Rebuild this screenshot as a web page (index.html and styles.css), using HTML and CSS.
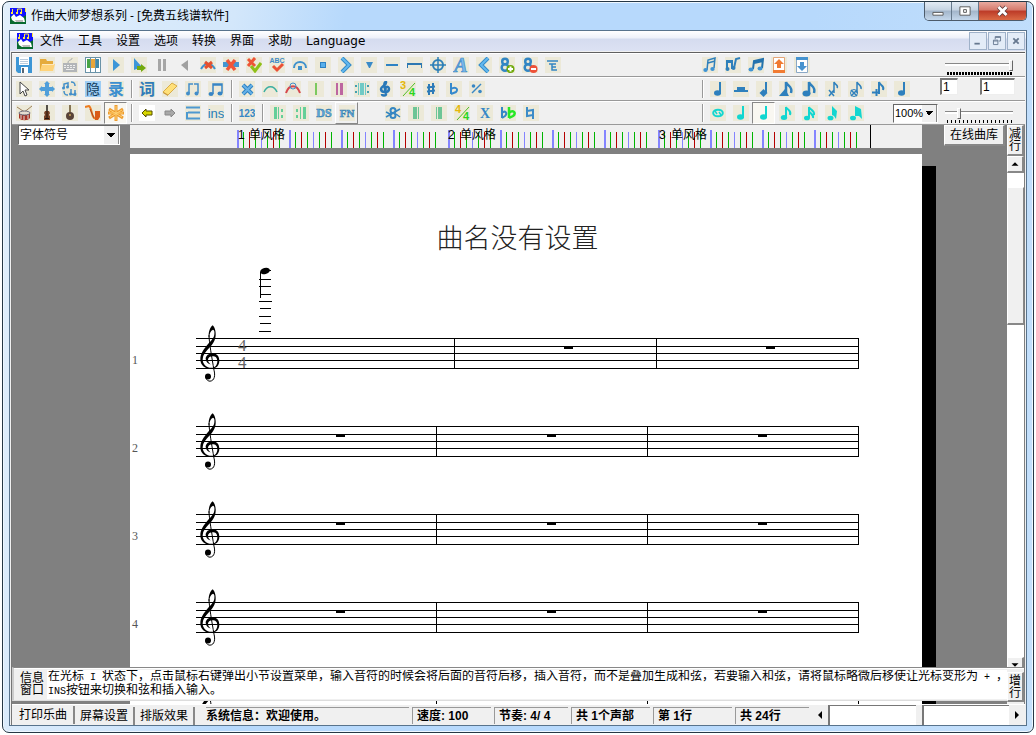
FILE: index.html
```html
<!DOCTYPE html>
<html lang="zh-CN">
<head>
<meta charset="utf-8">
<title>作曲大师梦想系列</title>
<link rel="stylesheet" href="styles.css">
</head>
<body>
<svg class="sprite" aria-hidden="true">
  <defs>
    <symbol id="logo" viewBox="0 0 16 16"><path fill="#11f" d="M0 0h16v9H0z"/><path fill="#086a30" d="M0 9l3-2 2 3h6l5-3v9H0z"/><path d="M2.500 5V1M7.500 5V1h4v4M15.500 0v4" fill="none" stroke="#ffe840"/><path fill="#ffe840" d="M1 4h2v2H1zM6 4h2v2H6zM10 4h2v2h-2z"/><path fill="#fff" d="M1 9l3-3 2 3 4-2 4 3 1 4H5l-3-2z"/><path fill="#bbb" d="M5 12h8v2H6z"/></symbol>
    <symbol id="save" viewBox="0 0 16 16"><path fill="#3d96d6" d="M0 0h16v16H2l-2-2z"/><path fill="#fff" d="M3 0h10v8H3zM5 10h7v6H5z"/><path stroke="#bcd" d="M4 2.500h8M4 4.500h8M4 6.500h8"/><path fill="#567" d="M6 11h2v5H6z"/></symbol>
    <symbol id="folder" viewBox="0 0 16 16"><path fill="#e5ab3d" d="M1 2h6l1 2h6v10H1z"/><path fill="#ffd37a" d="M3 7h13l-2 7H1z"/><path fill="#fff" opacity=".5" d="M3 7h12v1H3z"/></symbol>
    <symbol id="keyboard" viewBox="0 0 16 16"><path fill="#b2b5b8" d="M1 6h14v9H1z"/><path d="M6 6c0-4 4-2 4-5" fill="none" stroke="#a5a9ac"/><path stroke="#eee" stroke-dasharray="2 1" d="M2 8.500h12M2 10.500h12"/><path stroke="#eee" d="M4 12.500h8"/></symbol>
    <symbol id="piano" viewBox="0 0 16 16"><path fill="#6a93a8" d="M0 0h16v16H0z"/><path fill="#fff" d="M1 1h4v14H1zM6 1h4v14H6zM11 1h4v14h-4z"/><path fill="#47a447" d="M2 2h3v9H2z"/><path fill="#e8a53a" d="M6 2h4v9H6z"/><path fill="#3f88a8" d="M11 2h3v9h-3z"/></symbol>
    <symbol id="play" viewBox="0 0 16 16"><path fill="#3c96d8" d="M5 2l7 6-7 6z"/></symbol>
    <symbol id="play-next" viewBox="0 0 16 16"><path fill="#3c96d8" d="M3 1l8 9-8 3z"/><path fill="#72a90e" d="M6 9h4V7l5 4-5 4v-2H6z"/></symbol>
    <symbol id="pause" viewBox="0 0 16 16"><path fill="#a6a6a6" d="M4 2h3v12H4zM9 2h3v12H9z"/></symbol>
    <symbol id="back" viewBox="0 0 16 16"><path fill="#a0a0a0" d="M11 3v11L4 8z"/></symbol>
    <symbol id="slur-x" viewBox="0 0 16 16"><path d="M1 12c4-7 10-7 14 0" fill="none" stroke="#3e91cd" stroke-width="2"/><path d="M5 5l7 6M12 5l-7 6" stroke="#e4502e" stroke-width="3"/></symbol>
    <symbol id="bar-x" viewBox="0 0 16 16"><path fill="#4495d2" d="M0 5h16v5H0z"/><path d="M4 3l8 10M12 3L4 13" stroke="#f0553a" stroke-width="3.500"/></symbol>
    <symbol id="x-check" viewBox="0 0 16 16"><path d="M2 2l7 7M9 1L2 9" stroke="#ee5535" stroke-width="3"/><path d="M5 9l4 5 6-8" fill="none" stroke="#8fc018" stroke-width="3"/></symbol>
    <symbol id="abc" viewBox="0 0 16 16"><text x="8" y="6" font-size="7" font-weight="700" fill="#3d8bc8" text-anchor="middle">ABC</text><path d="M4 9l4 4 6-6" fill="none" stroke="#ea5136" stroke-width="3"/></symbol>
    <symbol id="fermata" viewBox="0 0 16 16"><path d="M2 11c0-8 12-8 12 0" fill="none" stroke="#3e91cd" stroke-width="2"/><path fill="#3e91cd" d="M6 9h4v4H6z"/></symbol>
    <symbol id="dot" viewBox="0 0 16 16"><path fill="#2e83c4" d="M5 5h6v6H5z"/><path fill="#59b0ec" d="M6 6h4v4H6z"/></symbol>
    <symbol id="accent" viewBox="0 0 16 16"><path d="M4 1l7 7-7 7" fill="none" stroke="#348bc9" stroke-width="4"/><path d="M4 1l7 7-7 7" fill="none" stroke="#64b9ef" stroke-width="2"/></symbol>
    <symbol id="wedge" viewBox="0 0 16 16"><path fill="#3a8bc8" d="M5 5h7l-3 6H8z"/></symbol>
    <symbol id="dash" viewBox="0 0 16 16"><path fill="#2e83c4" d="M2 7h12v2H2z"/></symbol>
    <symbol id="bracket" viewBox="0 0 16 16"><path fill="#2e78b2" d="M0 6h15v5h-1V8H1v3H0z"/></symbol>
    <symbol id="coda" viewBox="0 0 16 16"><circle cx="8" cy="8" r="5" fill="none" stroke="#2e80b8" stroke-width="2"/><path d="M8 0v16M0 8h16" stroke="#2e80b8" stroke-width="1.500"/></symbol>
    <symbol id="letter" viewBox="0 0 16 16"><text class="serif" x="8" y="15" font-size="20" font-weight="700" font-style="italic" fill="#7bb9eb" stroke="#3c8aca" stroke-width=".7" text-anchor="middle">A</text></symbol>
    <symbol id="less" viewBox="0 0 16 16"><path d="M12 1L5 8l7 7" fill="none" stroke="#348bc9" stroke-width="4"/><path d="M12 1L5 8l7 7" fill="none" stroke="#64b9ef" stroke-width="2"/></symbol>
    <symbol id="eight" viewBox="0 0 16 16"><circle cx="6" cy="4.500" r="2.800" fill="none" stroke="#3286c4" stroke-width="2.500"/><circle cx="6" cy="10.500" r="3.300" fill="none" stroke="#3286c4" stroke-width="2.500"/></symbol>
    <symbol id="eight-plus" viewBox="0 0 16 16"><use href="#eight"/><circle cx="11.500" cy="12" r="4" fill="#70a90b"/><path stroke="#fff" stroke-width="2" d="M9 12h5M11.500 9.500v5"/></symbol>
    <symbol id="eight-minus" viewBox="0 0 16 16"><use href="#eight"/><circle cx="11.500" cy="12" r="4" fill="#ed5138"/><path stroke="#fff" stroke-width="2" d="M9 12h5"/></symbol>
    <symbol id="tremolo" viewBox="0 0 16 16"><path d="M2 4h11M4 7h7M7 7v6h5M7 10h4" fill="none" stroke="#3686c2" stroke-width="1.500"/></symbol>
    <symbol id="cursor" viewBox="0 0 16 16"><path d="M4 1v12l3-3 2 5 2-1-2-5h4z" fill="#fff" stroke="#444"/></symbol>
    <symbol id="move" viewBox="0 0 16 16"><path d="M8 0l4 4h-2v2h2V4l4 4-4 4v-2h-2v2h2l-4 4-4-4h2v-2H4v2L0 8l4-4v2h2V4H4z" fill="#509fda"/><path fill="#ece9d8" d="M3 3h3v3H3zM10 3h3v3h-3zM3 10h3v3H3zM10 10h3v3h-3z"/></symbol>
    <symbol id="convert" viewBox="0 0 16 16"><path d="M2 7V3l4-1v4M9 8v5l4 1V9M9 1c4 0 4 2 4 4M2 10c0 4 2 4 4 4" fill="none" stroke="#438fca" stroke-width="1.500"/><circle cx="1.500" cy="7" r="1.500" fill="#438fca"/><circle cx="5.500" cy="6" r="1.500" fill="#438fca"/><circle cx="8.500" cy="13" r="1.500" fill="#438fca"/><circle cx="13" cy="13" r="1.500" fill="#438fca"/></symbol>
    <symbol id="hide" viewBox="0 0 16 16"><path fill="#9ecdf4" d="M0 0h16v16H0z"/><text x="8" y="13" font-size="14" fill="#123c5e" text-anchor="middle">隐</text></symbol>
    <symbol id="record" viewBox="0 0 16 16"><text x="8" y="14" font-size="16" font-weight="700" fill="#3c8fd0" text-anchor="middle">录</text></symbol>
    <symbol id="lyric" viewBox="0 0 16 16"><text x="8" y="14" font-size="16" font-weight="700" fill="#307cb8" text-anchor="middle">词</text></symbol>
    <symbol id="eraser" viewBox="0 0 16 16"><path d="M1 11l9-9 5 3-9 9z" fill="#ffe078" stroke="#d8ac48"/><path d="M1 11l5 3v1l-5-3z" fill="#c89535"/></symbol>
    <symbol id="pair" viewBox="0 0 16 16"><path d="M4 12V3h4M9 3h4v9" fill="none" stroke="#428dc9" stroke-width="1.500"/><circle cx="3" cy="12.500" r="2" fill="#428dc9"/><circle cx="11.500" cy="12.500" r="2" fill="#428dc9"/></symbol>
    <symbol id="beam" viewBox="0 0 16 16"><path d="M5 13V3h9v9M5 4h9" fill="none" stroke="#3785c5" stroke-width="1.500"/><ellipse cx="3" cy="13" rx="2.500" ry="2" fill="#3785c5"/><ellipse cx="12" cy="12.500" rx="2.500" ry="2" fill="#3785c5"/></symbol>
    <symbol id="cross" viewBox="0 0 16 16"><path d="M4 4l9 9M13 4l-9 9" stroke="#2d82c3" stroke-width="4"/><path d="M4 4l9 9M13 4l-9 9" stroke="#66b1e7" stroke-width="2"/></symbol>
    <symbol id="slur" viewBox="0 0 16 16"><path d="M2 11c3-7 10-7 13 0" fill="none" stroke="#3aaea0" stroke-width="1.500"/></symbol>
    <symbol id="slur-red" viewBox="0 0 16 16"><path d="M1 12c3-9 11-9 14 0" fill="none" stroke="#d6474d" stroke-width="2"/><circle cx="8" cy="5" r="3" fill="none" stroke="#438fca"/></symbol>
    <symbol id="bar" viewBox="0 0 16 16"><path fill="#7cc95f" d="M7 2h2v12H7z"/></symbol>
    <symbol id="double-bar" viewBox="0 0 16 16"><path fill="#bd66a0" d="M5 2h2v12H5zM9 2h3v12H9z"/></symbol>
    <symbol id="repeat-both" viewBox="0 0 16 16"><path fill="#70cac5" d="M4 2h1v12H4zM6 2h4v12H6zM11 2h1v12h-1z"/><path fill="#449fae" d="M1 4h2v2H1zM1 10h2v2H1zM13 4h2v2h-2zM13 10h2v2h-2z"/></symbol>
    <symbol id="mini-clef" viewBox="0 0 16 16"><path d="M9 9c-2-4 3-4 3-1 0 4-8 4-8 0 0-3 6-4 5-7-2 0-2 3-1 7l1 5c0 2-4 2-4 0" fill="none" stroke="#2878b8" stroke-width="2.500"/></symbol>
    <symbol id="three-four" viewBox="0 0 16 16"><path d="M3 15L15 2" stroke="#52bf26"/><text x="3" y="8" font-size="11" font-weight="700" fill="#e5b70b" text-anchor="middle">3</text><text x="12" y="15" font-size="11" font-weight="700" fill="#28d61c" text-anchor="middle">4</text></symbol>
    <symbol id="four-four" viewBox="0 0 16 16"><path d="M3 15L15 2" stroke="#52bf26"/><text x="4" y="8" font-size="11" font-weight="700" fill="#e5b70b" text-anchor="middle">4</text><text x="12" y="15" font-size="11" font-weight="700" fill="#28d61c" text-anchor="middle">4</text></symbol>
    <symbol id="sharp" viewBox="0 0 16 16"><path d="M6 3v11M10 2v11M4 6.500l8-1M4 10.500l8-1" stroke="#2c7bb8" stroke-width="2"/></symbol>
    <symbol id="flat" viewBox="0 0 16 16"><path d="M5 2v11M5 8c4-3 8 0 5 3-2 1-3 1-5 2" fill="none" stroke="#3589cd" stroke-width="2"/></symbol>
    <symbol id="percent" viewBox="0 0 16 16"><path d="M3 12l9-9" stroke="#3988c5" stroke-width="1.500"/><circle cx="4.500" cy="5" r="1.800" fill="#3988c5"/><circle cx="11" cy="10.500" r="1.800" fill="#3988c5"/></symbol>
    <symbol id="drum" viewBox="0 0 16 16"><path d="M1 2l9 6M16 1L7 8" stroke="#9d805b"/><path fill="#a73224" d="M3 8h11v5c-2 3-9 3-11 0z"/><ellipse cx="8.500" cy="8" rx="5.500" ry="2" fill="#e5ddd0" stroke="#667"/><path stroke="#ddd" d="M5 10v4M8 11v4M12 10v4"/></symbol>
    <symbol id="violin" viewBox="0 0 16 16"><path d="M8 0v7" stroke="#201b18" stroke-width="1.500"/><path fill="#774327" d="M6 6h4l1 2-1 2 1 1v4H5v-4l1-1-1-2z"/><path stroke="#24150d" d="M8 6v7M6 13.500h4"/></symbol>
    <symbol id="lute" viewBox="0 0 16 16"><path d="M8 0v8" stroke="#654e28" stroke-width="1.500"/><circle cx="8" cy="11" r="4" fill="#594338"/><circle cx="8" cy="10" r="1" fill="#cba65c"/></symbol>
    <symbol id="sax" viewBox="0 0 16 16"><path d="M0 2l4-1c3 2 2 9 5 12 3 2 3-1 4-6" fill="none" stroke="#ed7b20" stroke-width="2"/><path fill="#d95a18" d="M10 6h5v6l-2 3h-3z"/><path d="M5 4l4 9" stroke="#a94b28"/></symbol>
    <symbol id="star" viewBox="0 0 16 16"><path d="M8 0v16M1 4l14 9M15 4L1 13M0 8h16" stroke="#ee9c2e" stroke-width="3"/><path d="M8 1v14M2 5l12 7M14 5L2 12M1 8h14" stroke="#ffd174"/></symbol>
    <symbol id="left" viewBox="0 0 16 16"><path d="M3 8l4-4v2h6v4H7v2z" fill="#d7d600" stroke="#554f00"/></symbol>
    <symbol id="right" viewBox="0 0 16 16"><path d="M13 8L9 4v2H3v4h6v2z" fill="#a8a8a8" stroke="#888"/></symbol>
    <symbol id="lines" viewBox="0 0 16 16"><path d="M1 2.500h14M3 7.500h12M1 13.500h14M2 7v6" fill="none" stroke="#4c98d0" stroke-width="2"/></symbol>
    <symbol id="ins" viewBox="0 0 16 16"><text x="8" y="13" font-size="13" fill="#277eba" text-anchor="middle">ins</text></symbol>
    <symbol id="num" viewBox="0 0 16 16"><text x="8" y="12" font-size="10" font-weight="700" fill="#3687c5" text-anchor="middle">123</text></symbol>
    <symbol id="repeat-start" viewBox="0 0 16 16"><path fill="#65cf98" d="M4 2h3v12H4zM8 2h1v12H8zM11 4h2v3h-2zM11 10h2v3h-2z"/></symbol>
    <symbol id="repeat-end" viewBox="0 0 16 16"><path fill="#65cf98" d="M10 2h3v12h-3zM7 2h1v12H7zM3 4h2v3H3zM3 10h2v3H3z"/></symbol>
    <symbol id="ds" viewBox="0 0 16 16"><text class="serif" x="8" y="12" font-size="12" font-weight="700" fill="#61acdf" stroke="#347cad" stroke-width=".5" text-anchor="middle">DS</text></symbol>
    <symbol id="fn" viewBox="0 0 16 16"><text class="serif" x="8" y="12" font-size="11" font-weight="700" fill="#61acdf" stroke="#347cad" stroke-width=".5" text-anchor="middle">FN</text></symbol>
    <symbol id="segno" viewBox="0 0 16 16"><circle cx="8" cy="5.500" r="2.500" fill="none" stroke="#3586c2" stroke-width="2"/><circle cx="8" cy="10.500" r="2.500" fill="none" stroke="#3586c2" stroke-width="2"/><path d="M1 12l14-8M1 7l4 2M11 9l4 3" stroke="#3586c2" stroke-width="1.500"/></symbol>
    <symbol id="end-bar" viewBox="0 0 16 16"><path fill="#6dc596" d="M5 2h4v12H5zM10 2h1v12h-1z"/></symbol>
    <symbol id="start-bar" viewBox="0 0 16 16"><path fill="#6dc596" d="M7 2h4v12H7zM5 2h1v12H5z"/></symbol>
    <symbol id="double-sharp" viewBox="0 0 16 16"><text class="serif" x="8" y="13" font-size="14" font-weight="700" fill="#3587c7" text-anchor="middle">X</text></symbol>
    <symbol id="double-flat" viewBox="0 0 16 16"><path d="M2 2v11M2 8c3-3 6 0 3 3L2 13" fill="none" stroke="#3587c7" stroke-width="2"/><path d="M9 2v11M9 8c4-4 8 0 4 3l-4 2" fill="none" stroke="#25e826" stroke-width="2.500"/></symbol>
    <symbol id="natural" viewBox="0 0 16 16"><path d="M4 2v9l6-1M4 6l6-1v9" fill="none" stroke="#3b8bc8" stroke-width="2"/></symbol>
    <symbol id="sixteenth-beam" viewBox="0 0 16 16"><path d="M5 13L6 3l7-2-1 10M6 6l7-2" fill="none" stroke="#2f80bb" stroke-width="1.500"/><ellipse cx="3.500" cy="13" rx="2.200" ry="2" fill="#3f94d4"/><ellipse cx="10.500" cy="12" rx="2.200" ry="2" fill="#3f94d4"/></symbol>
    <symbol id="notes-link" viewBox="0 0 16 16"><path d="M2 12V4h5v8M9 11l2-9 4-1M2 5h5" fill="none" stroke="#2f80bb" stroke-width="2"/><circle cx="2.500" cy="12" r="2" fill="#2f80bb"/><circle cx="8.500" cy="11" r="2" fill="#2f80bb"/></symbol>
    <symbol id="wide-beam" viewBox="0 0 16 16"><path d="M5 12l1-8 9-2-1 9M6 6l9-2" fill="none" stroke="#2472ad" stroke-width="2"/><ellipse cx="3" cy="12.500" rx="2.500" ry="2" fill="#3f94d4"/><ellipse cx="12" cy="11.500" rx="2.500" ry="2" fill="#3f94d4"/></symbol>
    <symbol id="upload" viewBox="0 0 16 16"><path fill="#fff" stroke="#e5a577" d="M2.500.5h11v15h-11z"/><path fill="#f17b32" d="M2 13h12v3H2zM8 2l5 5h-3v4H6V7H3z"/></symbol>
    <symbol id="download" viewBox="0 0 16 16"><path fill="#fff" stroke="#8ba8c5" d="M2.500.5h11v15h-11z"/><path fill="#4693cf" d="M2 0h12v3H2zM8 14l5-5h-3V5H6v4H3z"/></symbol>
    <symbol id="quarter" viewBox="0 0 16 16"><path d="M10 1v12" stroke="currentColor" stroke-width="2"/><ellipse cx="7.500" cy="12" rx="3.500" ry="2.800" fill="currentColor"/></symbol>
    <symbol id="rest" viewBox="0 0 16 16"><path fill="currentColor" d="M1 9h14v2H1zM4 6h8v3H4z"/></symbol>
    <symbol id="diamond" viewBox="0 0 16 16"><path d="M10 1v11" stroke="currentColor" stroke-width="2"/><path d="M7.500 8l4 4-4 4-4-4z" fill="currentColor"/></symbol>
    <symbol id="eighth" viewBox="0 0 16 16"><path d="M7 13V2c1 3 6 3 4 8" fill="none" stroke="currentColor" stroke-width="2"/><ellipse cx="5" cy="12.500" rx="3.200" ry="2.500" fill="currentColor"/></symbol>
    <symbol id="big-eighth" viewBox="0 0 16 16"><path d="M7 13V1c1 4 7 4 5 11" fill="none" stroke="currentColor" stroke-width="2.500"/><ellipse cx="4.500" cy="12.500" rx="4" ry="3" fill="currentColor"/></symbol>
    <symbol id="triangle-note" viewBox="0 0 16 16"><path d="M7 13V1c1 4 7 4 5 11" fill="none" stroke="currentColor" stroke-width="2.500"/><path d="M0 15l6-7 4 7z" fill="currentColor"/></symbol>
    <symbol id="sixteenth" viewBox="0 0 16 16"><path d="M7 13V2c1 3 6 3 5 8M7 6c1 3 5 3 4 7" fill="none" stroke="currentColor" stroke-width="2"/><ellipse cx="5" cy="13" rx="3" ry="2.300" fill="currentColor"/></symbol>
    <symbol id="thirty-second" viewBox="0 0 16 16"><path fill="currentColor" d="M7 1l5 5-1 8-2-3-2-1z"/><ellipse cx="5.500" cy="13" rx="3" ry="2.300" fill="currentColor"/></symbol>
    <symbol id="sixty-fourth" viewBox="0 0 16 16"><path fill="currentColor" d="M7 1l6 3 1 10-3-3H7z"/><ellipse cx="5" cy="13" rx="3" ry="2.300" fill="currentColor"/></symbol>
    <symbol id="grace" viewBox="0 0 16 16"><path d="M9 12V1c1 3 5 3 3 6M4 9l5 6M9 9l-5 6" fill="none" stroke="currentColor" stroke-width="1.500"/></symbol>
    <symbol id="grace-o" viewBox="0 0 16 16"><path d="M9 12V1c1 3 5 3 4 7M3 9l6 6M9 9l-6 6" fill="none" stroke="currentColor" stroke-width="1.500"/><circle cx="6" cy="12" r="3.500" fill="none" stroke="currentColor"/></symbol>
    <symbol id="grace-plus" viewBox="0 0 16 16"><path d="M8 13V1c1 4 6 3 4 8M1 11.500h8M5.500 8v7" fill="none" stroke="currentColor" stroke-width="2"/></symbol>
    <symbol id="whole" viewBox="0 0 16 16"><ellipse cx="8" cy="8" rx="4.800" ry="3.300" fill="none" stroke="currentColor" stroke-width="2"/><path d="M5 6l2 3M9 7l2 3" stroke="currentColor" stroke-width="1.500"/></symbol>
    <symbol id="clef" viewBox="0 0 60 170"><path d="M27 30C27 50 36 100 42 135C46 150 44 167 30 168C22 168 16 160 18 154" fill="none" stroke="#000" stroke-width="3"/><circle cx="24" cy="154" r="9"/><path d="M26 36C25 18 31 5 38 0C44 5 48 18 47 30C46 46 38 57 28 68C16 81 9 89 8 102C8 118 20 128 34 128C45 128 52 119 52 108C52 97 46 93 38 93C29 93 24 98 24 104C24 111 28 115 32 118C24 116 17 110 17 101C17 91 26 84 38 84C50 84 58 93 58 106C58 122 48 131 33 131C14 131 1 119 1 102C1 84 12 71 21 60C31 48 41 42 43 28C44 20 43 15 39 14C32 17 28 26 28 36Z"/></symbol>
    <g id="beat"><path fill="#8484ff" d="M0 5h2v18H0zM24 7h1v16h-1z"/><path fill="#00b400" d="M6 7h1v16H6zM18 7h1v16h-1zM30 7h1v16h-1zM42 7h1v16h-1z"/><path fill="#b40000" d="M12 7h1v16h-1zM36 7h1v16h-1z"/></g>
    <g id="measure"><use href="#beat"/><use href="#beat" x="52"/><use href="#beat" x="104"/><use href="#beat" x="156"/></g>
    <g id="staff"><path d="M66 22h663v1H66zM66 30h663v1H66zM66 37h663v1H66zM66 44h663v1H66zM66 52h663v1H66zM728 22h1v31h-1z"/><use href="#clef" x="70" y="9" width="20" height="57"/></g>
    <g id="full-line"><use href="#staff"/><path d="M306 22h1v31h-1zM517 22h1v31h-1zM206 30h9v3h-9zM417 30h9v3h-9zM628 30h9v3h-9z"/></g>
  </defs>
</svg>

<main class="window">
  <header class="titlebar">
    <svg class="icon"><use href="#logo"/></svg>
    <h1 class="title">作曲大师梦想系列 - [免费五线谱软件]</h1>
    <div class="caption">
      <button class="cap" aria-label="最小化"><svg viewBox="0 0 28 18"><path d="M8.500 10.500h11v3h-11z" fill="#fff" stroke="#555"/></svg></button>
      <button class="cap" aria-label="最大化"><svg viewBox="0 0 28 18"><path d="M8.500 4.500h11v9h-11zM12.500 7.500h3v3h-3z" fill="#fff" stroke="#555"/></svg></button>
      <button class="cap cap-close" aria-label="关闭"><svg viewBox="0 0 28 18"><path d="M10 5l8 8M18 5l-8 8" stroke="#533" stroke-width="4.500"/><path d="M10 5l8 8M18 5l-8 8" stroke="#fff" stroke-width="3"/></svg></button>
    </div>
  </header>

  <div class="client">
    <nav class="menubar">
      <svg class="icon"><use href="#logo"/></svg>
      <button class="menu">文件</button><button class="menu">工具</button><button class="menu">设置</button><button class="menu">选项</button><button class="menu">转换</button><button class="menu">界面</button><button class="menu">求助</button><button class="menu latin">Language</button>
      <div class="mdi">
        <button aria-label="最小化文档"><svg viewBox="0 0 18 18"><path d="M5 11h6v2H5z" fill="#66788f"/></svg></button>
        <button aria-label="还原文档"><svg viewBox="0 0 18 18"><path d="M7 7V4h6v5h-2M5 8h5v5H5zM7 5h6M5 9h5" fill="none" stroke="#66788f"/></svg></button>
        <button aria-label="关闭文档"><svg viewBox="0 0 18 18"><path d="M6 6l6 6M12 6l-6 6" stroke="#66788f" stroke-width="2"/></svg></button>
      </div>
    </nav>

    <div class="body">
      <div class="toolrow">
        <div class="tools main-tools">
          <button class="tool" aria-label="保存"><svg><use href="#save"/></svg></button>
          <button class="tool" aria-label="打开"><svg><use href="#folder"/></svg></button>
          <button class="tool" aria-label="键盘"><svg><use href="#keyboard"/></svg></button>
          <button class="tool" aria-label="钢琴"><svg><use href="#piano"/></svg></button>
          <button class="tool" aria-label="播放"><svg><use href="#play"/></svg></button>
          <button class="tool" aria-label="从此播放"><svg><use href="#play-next"/></svg></button>
          <button class="tool plain" aria-label="暂停"><svg><use href="#pause"/></svg></button>
          <button class="tool plain" aria-label="返回"><svg><use href="#back"/></svg></button>
          <button class="tool" aria-label="删除连线"><svg><use href="#slur-x"/></svg></button>
          <button class="tool" aria-label="删除小节"><svg><use href="#bar-x"/></svg></button>
          <button class="tool" aria-label="校验"><svg><use href="#x-check"/></svg></button>
          <button class="tool" aria-label="歌词检查"><svg><use href="#abc"/></svg></button>
          <button class="tool" aria-label="延长"><svg><use href="#fermata"/></svg></button>
          <button class="tool" aria-label="断音"><svg><use href="#dot"/></svg></button>
          <button class="tool" aria-label="重音"><svg><use href="#accent"/></svg></button>
          <button class="tool" aria-label="顿音"><svg><use href="#wedge"/></svg></button>
          <button class="tool" aria-label="保持音"><svg><use href="#dash"/></svg></button>
          <button class="tool" aria-label="括线"><svg><use href="#bracket"/></svg></button>
          <button class="tool" aria-label="尾声"><svg><use href="#coda"/></svg></button>
          <button class="tool" aria-label="文字"><svg><use href="#letter"/></svg></button>
          <button class="tool" aria-label="渐强"><svg><use href="#less"/></svg></button>
          <button class="tool" aria-label="高八度"><svg><use href="#eight-plus"/></svg></button>
          <button class="tool" aria-label="低八度"><svg><use href="#eight-minus"/></svg></button>
          <button class="tool" aria-label="震音"><svg><use href="#tremolo"/></svg></button>
        </div>
        <div class="tools note-tools">
          <button class="tool" aria-label="十六分连音"><svg><use href="#sixteenth-beam"/></svg></button>
          <button class="tool" aria-label="连接音符"><svg><use href="#notes-link"/></svg></button>
          <button class="tool" aria-label="连音"><svg><use href="#wide-beam"/></svg></button>
          <button class="tool" aria-label="上移"><svg><use href="#upload"/></svg></button>
          <button class="tool" aria-label="下移"><svg><use href="#download"/></svg></button>
        </div>
        <div class="controls"><input class="slider" type="range" aria-label="音量" min="0" max="100" value="100"><span class="ticks dense"></span></div>
      </div>
      <div class="toolrow">
        <div class="tools main-tools">
          <button class="tool" aria-label="选择"><svg><use href="#cursor"/></svg></button>
          <button class="tool" aria-label="移动"><svg><use href="#move"/></svg></button>
          <button class="tool" aria-label="转换音符"><svg><use href="#convert"/></svg></button>
          <button class="tool" aria-label="隐藏"><svg><use href="#hide"/></svg></button>
          <button class="tool" aria-label="录制"><svg><use href="#record"/></svg></button>
          <span class="sep"></span>
          <button class="tool" aria-label="歌词"><svg><use href="#lyric"/></svg></button>
          <button class="tool" aria-label="橡皮"><svg><use href="#eraser"/></svg></button>
          <button class="tool" aria-label="分开符尾"><svg><use href="#pair"/></svg></button>
          <button class="tool" aria-label="合并符尾"><svg><use href="#beam"/></svg></button>
          <span class="sep"></span>
          <button class="tool" aria-label="删除"><svg><use href="#cross"/></svg></button>
          <button class="tool" aria-label="连线"><svg><use href="#slur"/></svg></button>
          <button class="tool" aria-label="三连音"><svg><use href="#slur-red"/></svg></button>
          <button class="tool" aria-label="小节线"><svg><use href="#bar"/></svg></button>
          <button class="tool" aria-label="双小节线"><svg><use href="#double-bar"/></svg></button>
          <button class="tool" aria-label="双向反复"><svg><use href="#repeat-both"/></svg></button>
          <button class="tool" aria-label="谱号"><svg><use href="#mini-clef"/></svg></button>
          <button class="tool" aria-label="拍号"><svg><use href="#three-four"/></svg></button>
          <button class="tool" aria-label="升号"><svg><use href="#sharp"/></svg></button>
          <button class="tool" aria-label="降号"><svg><use href="#flat"/></svg></button>
          <button class="tool" aria-label="重复小节"><svg><use href="#percent"/></svg></button>
        </div>
        <div class="tools note-tools blue">
          <span class="sep"></span>
          <button class="tool" aria-label="四分音符"><svg><use href="#quarter"/></svg></button>
          <button class="tool" aria-label="休止符"><svg><use href="#rest"/></svg></button>
          <button class="tool" aria-label="菱形音符"><svg><use href="#diamond"/></svg></button>
          <button class="tool" aria-label="三角音符"><svg><use href="#triangle-note"/></svg></button>
          <button class="tool" aria-label="八分音符"><svg><use href="#big-eighth"/></svg></button>
          <button class="tool" aria-label="打击音符"><svg><use href="#grace"/></svg></button>
          <button class="tool" aria-label="圆形打击音符"><svg><use href="#grace-o"/></svg></button>
          <button class="tool" aria-label="十字音符"><svg><use href="#grace-plus"/></svg></button>
          <button class="tool" aria-label="实音符"><svg><use href="#quarter"/></svg></button>
        </div>
        <div class="controls fields"><input class="num" aria-label="起始小节" value="1"><input class="num wide" aria-label="结束小节" value="1"></div>
      </div>
      <div class="toolrow">
        <div class="tools main-tools">
          <button class="tool" aria-label="鼓"><svg><use href="#drum"/></svg></button>
          <button class="tool" aria-label="小提琴"><svg><use href="#violin"/></svg></button>
          <button class="tool" aria-label="琵琶"><svg><use href="#lute"/></svg></button>
          <button class="tool" aria-label="萨克斯"><svg><use href="#sax"/></svg></button>
          <button class="tool pressed" aria-label="全部乐器"><svg><use href="#star"/></svg></button>
          <span class="sep"></span>
          <button class="tool white" aria-label="后退"><svg><use href="#left"/></svg></button>
          <button class="tool plain" aria-label="前进"><svg><use href="#right"/></svg></button>
          <button class="tool" aria-label="行距"><svg><use href="#lines"/></svg></button>
          <button class="tool" aria-label="插入"><svg><use href="#ins"/></svg></button>
          <span class="sep"></span>
          <button class="tool" aria-label="编号"><svg><use href="#num"/></svg></button>
          <span class="sep"></span>
          <button class="tool" aria-label="反复开始"><svg><use href="#repeat-start"/></svg></button>
          <button class="tool" aria-label="反复结束"><svg><use href="#repeat-end"/></svg></button>
          <button class="tool" aria-label="从记号反复"><svg><use href="#ds"/></svg></button>
          <button class="tool raised" aria-label="结束"><svg><use href="#fn"/></svg></button>
          <span class="gap"></span>
          <button class="tool" aria-label="记号"><svg><use href="#segno"/></svg></button>
          <button class="tool" aria-label="终止线"><svg><use href="#end-bar"/></svg></button>
          <button class="tool" aria-label="起始线"><svg><use href="#start-bar"/></svg></button>
          <button class="tool" aria-label="变拍号"><svg><use href="#four-four"/></svg></button>
          <button class="tool" aria-label="重升"><svg><use href="#double-sharp"/></svg></button>
          <button class="tool" aria-label="重降"><svg><use href="#double-flat"/></svg></button>
          <button class="tool" aria-label="还原"><svg><use href="#natural"/></svg></button>
        </div>
        <div class="tools note-tools cyan">
          <span class="sep"></span>
          <button class="tool" aria-label="全音符"><svg><use href="#whole"/></svg></button>
          <button class="tool" aria-label="二分"><svg><use href="#quarter"/></svg></button>
          <button class="tool pressed" aria-label="四分"><svg><use href="#quarter"/></svg></button>
          <button class="tool" aria-label="八分"><svg><use href="#eighth"/></svg></button>
          <button class="tool" aria-label="十六分"><svg><use href="#sixteenth"/></svg></button>
          <button class="tool" aria-label="三十二分"><svg><use href="#thirty-second"/></svg></button>
          <button class="tool" aria-label="六十四分"><svg><use href="#sixty-fourth"/></svg></button>
          <select class="combo zoom" aria-label="缩放"><option>100%</option></select>
        </div>
        <div class="controls"><input class="slider" type="range" aria-label="速度" min="0" max="100" value="18"><span class="ticks"></span></div>
      </div>

      <section class="workspace">
        <aside class="left-pane"><select class="combo symbols" aria-label="符号类型"><option>字体符号</option></select></aside>
        <div class="document">
          <svg class="ruler">
            <g shape-rendering="crispEdges"><use href="#measure" x="107"/><use href="#measure" x="318"/><use href="#measure" x="528"/><path d="M740 0h1v23h-1z"/></g>
            <text x="108" y="14">1</text><text x="119" y="14">单风格</text>
            <text x="318" y="14">2</text><text x="330" y="14">单风格</text>
            <text x="529" y="14">3</text><text x="541" y="14">单风格</text>
          </svg>
          <article class="page">
            <h2 class="song">曲名没有设置</h2>
            <svg class="system">
              <use href="#staff"/>
              <path d="M324 22h1v31h-1zM526 22h1v31h-1zM434 30h9v3h-9zM636 30h9v3h-9z"/>
              <ellipse cx="135" cy="-45" rx="5" ry="3" transform="rotate(-15 135 -45)"/>
              <path d="M130-44h1v26h-1zM135-46h6v1h-6zM129-37h12v1h-12zM129-30h12v1h-12zM130-22h11v1h-11zM129-15h13v1h-13zM130-8h11v1h-11zM129 0h12v1h-12zM130 7h11v1h-11zM129 15h12v1h-12z"/>
              <text class="meter" x="108" y="35">4</text><text class="meter" x="108" y="52">4</text>
              <text x="2" y="48">1</text>
            </svg>
            <svg class="system"><use href="#full-line"/><text x="2" y="48">2</text></svg>
            <svg class="system"><use href="#full-line"/><text x="2" y="48">3</text></svg>
            <svg class="system"><use href="#full-line"/><text x="2" y="48">4</text></svg>
            <svg class="system"><use href="#full-line"/></svg>
          </article>
        </div>
        <aside class="right-pane">
          <button class="raised-btn library">在线曲库</button>
          <div class="vscroll">
            <button class="raised-btn row-btn">减行</button>
            <button class="raised-btn arrow" aria-label="向上滚动"><svg viewBox="0 0 16 16"><path d="M4 10h8L8 6z"/></svg></button>
            <div class="vtrack"><div class="vthumb"></div></div>
            <button class="raised-btn arrow" aria-label="向下滚动"><svg viewBox="0 0 16 16"><path d="M4 6h8l-4 4z"/></svg></button>
          </div>
        </aside>
        <div class="info">
          <span class="info-label">信息窗口</span>
          <p class="info-text">在光标<span class="ascii"> I </span>状态下，点击鼠标右键弹出小节设置菜单，输入音符的时候会将后面的音符后移，插入音符，而不是叠加生成和弦，若要输入和弦，请将鼠标略微后移使让光标变形为<span class="ascii"> + </span>，<br><span class="ascii">INS</span>按钮来切换和弦和插入输入。</p>
          <button class="raised-btn row-btn add">增行</button>
        </div>
      </section>

      <footer class="status">
        <button class="tab active">打印乐曲</button><button class="tab">屏幕设置</button><button class="tab">排版效果</button>
        <span class="cell message">系统信息：欢迎使用。</span>
        <span class="cell w80">速度: 100</span>
        <span class="cell w72">节奏: 4/ 4</span>
        <span class="cell w80">共 1个声部</span>
        <span class="cell w80">第 1行</span>
        <span class="cell w72">共 24行</span>
        <div class="hscroll">
          <button class="harrow" aria-label="向左滚动"><svg viewBox="0 0 16 16"><path d="M10 4v8L6 8z"/></svg></button>
          <div class="htrack"></div><div class="hthumb"></div><div class="htrack"></div>
          <button class="harrow" aria-label="向右滚动"><svg viewBox="0 0 16 16"><path d="M6 4v8l4-4z"/></svg></button>
        </div>
      </footer>
    </div>
  </div>
</main>
</body>
</html>
```

FILE: styles.css
```css
* { box-sizing: border-box; }

body {
  margin: 0;
  height: 100vh;
  padding: 1px 2px 2px;
  overflow: hidden;
  background: #fff;
  color: #000;
  font: 12px/16px "Liberation Sans", "Noto Sans CJK SC", sans-serif;
}

button, input, select { font: inherit; color: inherit; margin: 0; padding: 0; border: 0; border-radius: 0; background: none; }
svg { display: block; }
.sprite { position: absolute; width: 0; height: 0; }
.serif { font-family: "Liberation Serif", serif; }
.icon { width: 16px; height: 16px; flex: none; }

.window {
  display: flex;
  flex-direction: column;
  height: 100%;
  padding: 0 6px 6px;
  border: 1px solid #263846;
  border-radius: 7px;
  background: linear-gradient(100deg, #e2effb 0, #d3e7fb 230px, #b7d9fc 340px, #b7d9fc 800px, #c5e0fb 100%);
  box-shadow: inset 0 0 0 1px #eef7ff;
}

.titlebar { display: flex; height: 28px; flex: none; padding-left: 1px; }
.titlebar .icon { margin-top: 6px; }
.title { flex: 1; margin: 6px 0 0 5px; font: 400 12px/16px "Open Sans", "Noto Sans CJK SC", sans-serif; white-space: nowrap; }
.caption { display: flex; height: 19px; border: 1px solid #4c5b6b; border-top: 0; border-radius: 0 0 5px 5px; overflow: hidden; }
.cap { width: 27px; background: linear-gradient(#e3ebf4, #c5d3e2 45%, #a2b5ca 50%, #c4d7eb); border-right: 1px solid #66798c; }
.cap svg { width: 100%; height: 18px; }
.cap-close { width: 47px; border: 0; background: linear-gradient(#e9aaa0, #d5796b 45%, #bc3a27 50%, #da6a45); }

.client { display: flex; flex-direction: column; flex: 1; min-height: 0; border: 1px solid #58738c; background: #f0f0f0; }
.menubar { display: flex; align-items: center; height: 20px; flex: none; padding: 0 1px 0 7px; background: linear-gradient(#fff, #eef1f9 35%, #d5dcef 40%, #dce2f3); }
.menu { padding: 0 7px; white-space: nowrap; }
.latin { font: 12px/16px "DejaVu Sans", sans-serif; }
.mdi { display: flex; gap: 1px; margin-left: auto; }
.mdi button { width: 18px; height: 18px; border: 1px solid #9fb2c9; background: #e3ecf7; }
.mdi svg { width: 16px; height: 16px; }

.body { display: flex; flex-direction: column; flex: 1; min-height: 0; margin: 1px 1px 0; border-top: 1px solid #606060; border-left: 1px solid #777; }
.toolrow { display: flex; flex: none; height: 24px; border-top: 1px solid #fff; border-bottom: 1px solid #999; }
.tools { display: flex; align-items: center; }
.main-tools { flex: 1; }
.note-tools { width: 240px; flex: none; }
.tool { width: 23px; height: 22px; padding: 0 4px; flex: none; }
.tool svg { width: 16px; height: 16px; background: #ece9d8; overflow: hidden; }
.tool.plain svg { background: none; }
.tool.white svg { background: #fff; }
.tool.pressed { padding: 0 3px; border: 1px solid #888; border-right-color: #fff; border-bottom-color: #fff; background: #f9f7f1; }
.tool.pressed svg { background: none; }
.tool.raised { padding: 0 3px; border: 1px solid #fff; border-right-color: #888; border-bottom-color: #888; }
.sep { width: 8px; height: 18px; border-left: 4px solid transparent; background: linear-gradient(90deg, #999 1px, #fff 1px, #fff 2px, transparent 2px) content-box; }
.gap { width: 23px; }
.blue { color: #2e80bd; }
.cyan { color: #12d6d0; }

.controls { width: 87px; flex: none; padding: 6px 12px 0 7px; }
.fields { display: flex; gap: 22px; padding: 0 10px 0 2px; }
.num { width: 18px; height: 17px; padding-left: 1px; border: 1px solid #777; border-width: 2px 1px 1px 2px; border-right-color: #eee; border-bottom-color: #eee; background: #fff; }
.num.wide { width: 35px; }
.slider { display: block; width: 100%; height: 11px; appearance: none; background: linear-gradient(#888 1px, #fff 1px) 0 3px / 100% 3px no-repeat; }
.slider::-webkit-slider-thumb { appearance: none; width: 4px; height: 11px; border: 1px solid #fff; border-right-color: #666; border-bottom-color: #666; background: #f0f0f0; }
.ticks { display: block; height: 3px; margin: 1px 0 0 2px; background: repeating-linear-gradient(90deg, #000 0, #000 1px, transparent 1px, transparent 4px); }
.ticks.dense { background: repeating-linear-gradient(90deg, #000 0, #000 2px, transparent 2px, transparent 3px); }

.combo {
  appearance: none;
  padding-left: 1px;
  border: 1px solid #666;
  border-right-color: #fff;
  border-bottom-color: #fff;
  color: #000;
  background: conic-gradient(from -45deg at 50% 100%, #000 90deg, transparent 0) right 4px center / 8px 4px no-repeat,
    linear-gradient(#f0f0f0, #f0f0f0) right / 16px 100% no-repeat, #fff;
}
.combo { background: conic-gradient(from -45deg at 50% 100%, #000 90deg, transparent 0) right 4px center / 8px 4px no-repeat, linear-gradient(90deg, #fff 1px, #f0f0f0 1px, #f0f0f0 15px, #888 15px) right / 16px 100% no-repeat, #fff; }
.zoom { width: 45px; height: 19px; margin-left: auto; font-size: 11px; }
.symbols { width: 102px; height: 20px; margin-left: 6px; }

.workspace { position: relative; display: grid; grid-template-columns: 118px 1fr 103px; flex: 1; min-height: 0; overflow: hidden; background: #808080; }
.left-pane { display: flex; align-items: flex-start; }
.document { display: flex; flex-direction: column; min-height: 0; min-width: 0; }
.ruler { width: 100%; height: 23px; flex: none; background: #f0f0f0; }
.page { flex: 1; min-height: 0; margin-top: 6px; background: #fff; box-shadow: 14px 12px 0 #000; }
.song { margin: 0; padding: 65px 17px 61px 0; text-align: center; font: 300 27px/36px "Noto Sans CJK SC", sans-serif; color: #222; }
.system { width: 100%; height: 88px; overflow: visible; font: 12px "Liberation Serif", serif; fill: #000; }
.system text { fill: #555; }
.system .meter { font-size: 17px; fill: #666; }

.right-pane { position: relative; display: flex; align-items: flex-start; justify-content: flex-end; }
.raised-btn { border: 1px solid #fff; border-right: 2px solid #888; border-bottom: 2px solid #888; background: #f0f0f0; }
.library { width: 61px; height: 21px; margin-right: 2px; line-height: 15px; }
.vscroll { display: flex; flex-direction: column; width: 17px; height: 100%; padding-bottom: 30px; margin-right: 1px; background: #f0f0f0; }
.row-btn { width: 17px; height: 31px; line-height: 12px; overflow: hidden; flex: none; }
.arrow { width: 17px; height: 17px; flex: none; }
.arrow svg { width: 14px; height: 14px; }
.vtrack { flex: 1; padding-top: 14px; background: #fff; }
.vthumb { height: 138px; border: 1px solid #fff; border-right-color: #888; border-bottom: 2px solid #888; background: #f0f0f0; }

.info { position: absolute; left: 0; right: 1px; bottom: 3px; display: flex; height: 34px; padding: 2px 0 1px 3px; border-top: 1px solid #888; border-left: 2px solid #ccc; border-bottom: 1px solid #ddd; background: #f0f0f0; box-shadow: inset 0 1px #fff; }
.info-label { width: 30px; padding: 2px 3px 0; line-height: 12px; }
.info-text { flex: 1; margin: 0; padding-left: 1px; line-height: 12px; background: #fff; white-space: nowrap; overflow: hidden; }
.ascii { font: 10px/12px "Liberation Mono", monospace; white-space: pre; }
.add { height: 30px; margin-top: 2px; }

.status { display: flex; align-items: center; flex: none; height: 21px; padding-left: 1px; border-top: 1px solid #fff; background: #f0f0f0; font-weight: 700; }
.tab { width: 60px; height: 18px; margin-top: 2px; border-right: 2px solid #888; font-weight: 400; white-space: nowrap; }
.tab.active { width: 62px; margin-top: 0; }
.cell { height: 17px; margin-right: 3px; padding-left: 4px; border-top: 1px solid #999; border-left: 1px solid #999; white-space: nowrap; flex: none; }
.message { flex: 1; margin-left: 11px; padding-left: 0; border-left: 0; }
.w80 { width: 79px; }
.w72 { width: 74px; }
.hscroll { display: flex; width: 213px; height: 100%; flex: none; }
.harrow { width: 16px; flex: none; }
.harrow svg { width: 16px; height: 16px; }
.htrack { flex: 1; border-left: 2px solid #777; border-top: 1px solid #777; background: #fff; }
.hthumb { width: 6px; }
```
